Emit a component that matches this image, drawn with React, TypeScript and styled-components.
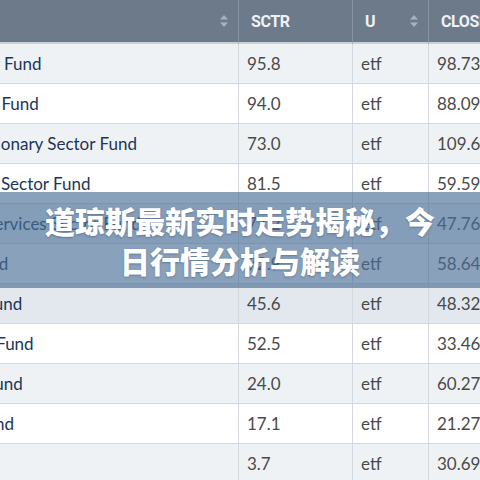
import React, { useLayoutEffect, useRef } from "react";
import styled, { createGlobalStyle } from "styled-components";

const Global = createGlobalStyle`
  html, body { margin: 0; padding: 0; background: #ffffff; }
  body { width: 480px; height: 480px; overflow: hidden; }
`;

const Page = styled.div`
  position: relative;
  width: 480px;
  height: 480px;
  overflow: hidden;
  background: #ffffff;
`;

const Scroller = styled.div`
  width: 480px;
  height: 480px;
  overflow: hidden;
`;

const Table = styled.table`
  border-collapse: separate;
  border-spacing: 0;
  table-layout: fixed;
  width: 703px;
  font-family: Lato, "Open Sans", sans-serif;
`;

const Th = styled.th<{ $first?: boolean }>`
  height: 44px;
  box-sizing: border-box;
  padding: 0 8px 0 12px;
  background: #6c7a8a;
  color: #eef2f6;
  font-family: Roboto, "Liberation Sans", sans-serif;
  font-weight: 700;
  font-size: 16px;
  letter-spacing: -0.4px;
  text-align: left;
  border-bottom: 2px solid #c9d0d7;
  border-left: ${(p) => (p.$first ? "none" : "1px solid #8794a2")};
  white-space: nowrap;
`;

const HeadInner = styled.div`
  display: flex;
  align-items: center;
  justify-content: space-between;
`;

const Row = styled.tr<{ $tone: "light" | "white" | "hover" }>`
  background: ${(p) =>
    p.$tone === "light" ? "#eff2f5" : p.$tone === "hover" ? "#e3e8ee" : "#ffffff"};
`;

const Td = styled.td<{ $first?: boolean; $name?: boolean }>`
  height: 40px;
  box-sizing: border-box;
  padding: 0 8px;
  font-size: 17px;
  color: ${(p) => (p.$name ? "#1b365a" : "#4a4a4a")};
  border-bottom: 1px solid #d3d8de;
  border-left: ${(p) => (p.$first ? "none" : "1px solid #d3d8de")};
  white-space: nowrap;
  overflow: hidden;
`;

const Banner = styled.div`
  position: absolute;
  left: 0;
  top: 192px;
  width: 480px;
  height: 96px;
  box-sizing: border-box;
  padding: 8px 36px;
  background: rgba(74, 110, 150, 0.65);
  display: flex;
  align-items: center;
  justify-content: center;
`;

const BannerText = styled.h1`
  margin: 0;
  color: #ffffff;
  font-family: "Noto Sans CJK SC", "Noto Sans", sans-serif;
  font-weight: 900;
  font-size: 30px;
  line-height: 40px;
  text-align: center;
  text-shadow: 0 1px 2px rgba(30, 50, 80, 0.35);
`;

const SortIcon = () => (
  <svg width="12" height="16" viewBox="0 0 12 16" aria-hidden="true">
    <path d="M6 2 L10 6.5 H2 Z" fill="#a9b3bf" />
    <path d="M6 14 L10 9.5 H2 Z" fill="#a9b3bf" />
  </svg>
);

type Item = { name: string; sctr: string; close: string };

const rows: Item[] = [
  { name: "Technology Sector Fund", sctr: "95.8", close: "98.73" },
  { name: "Health Care Index Fund", sctr: "94.0", close: "88.09" },
  { name: "Consumer Discretionary Sector Fund", sctr: "73.0", close: "109.6" },
  { name: "Consumer Staples Sector Fund", sctr: "81.5", close: "59.59" },
  { name: "Communication Services Sector Fund", sctr: "77.2", close: "47.76" },
  { name: "Energy Sector Fund", sctr: "72.9", close: "58.64" },
  { name: "Utilities Sectors Fund", sctr: "45.6", close: "48.32" },
  { name: "Industrials Sector Fund", sctr: "52.5", close: "33.46" },
  { name: "Financial Sector Fund", sctr: "24.0", close: "60.27" },
  { name: "Steel & Mining Fund", sctr: "17.1", close: "21.27" },
  { name: "Gold Miners Index", sctr: "3.7", close: "30.69" },
];

export default function App() {
  const ref = useRef<HTMLDivElement>(null);
  useLayoutEffect(() => {
    if (ref.current) ref.current.scrollLeft = 145;
  }, []);
  return (
    <Page>
      <Global />
      <Scroller ref={ref}>
        <Table>
          <colgroup>
            <col style={{ width: 383 }} />
            <col style={{ width: 114 }} />
            <col style={{ width: 76 }} />
            <col style={{ width: 130 }} />
          </colgroup>
          <thead>
            <tr>
              <Th $first>
                <HeadInner>
                  <span>NAME</span>
                  <SortIcon />
                </HeadInner>
              </Th>
              <Th>SCTR</Th>
              <Th>
                <HeadInner>
                  <span>U</span>
                  <SortIcon />
                </HeadInner>
              </Th>
              <Th>CLOSE</Th>
            </tr>
          </thead>
          <tbody>
            {rows.map((r, i) => (
              <Row key={r.name} $tone={i === 6 ? "hover" : i % 2 === 0 ? "light" : "white"}>
                <Td $first $name>{r.name}</Td>
                <Td>{r.sctr}</Td>
                <Td>etf</Td>
                <Td>{r.close}</Td>
              </Row>
            ))}
          </tbody>
        </Table>
      </Scroller>
      <Banner>
        <BannerText>道琼斯最新实时走势揭秘，今日行情分析与解读</BannerText>
      </Banner>
    </Page>
  );
}
